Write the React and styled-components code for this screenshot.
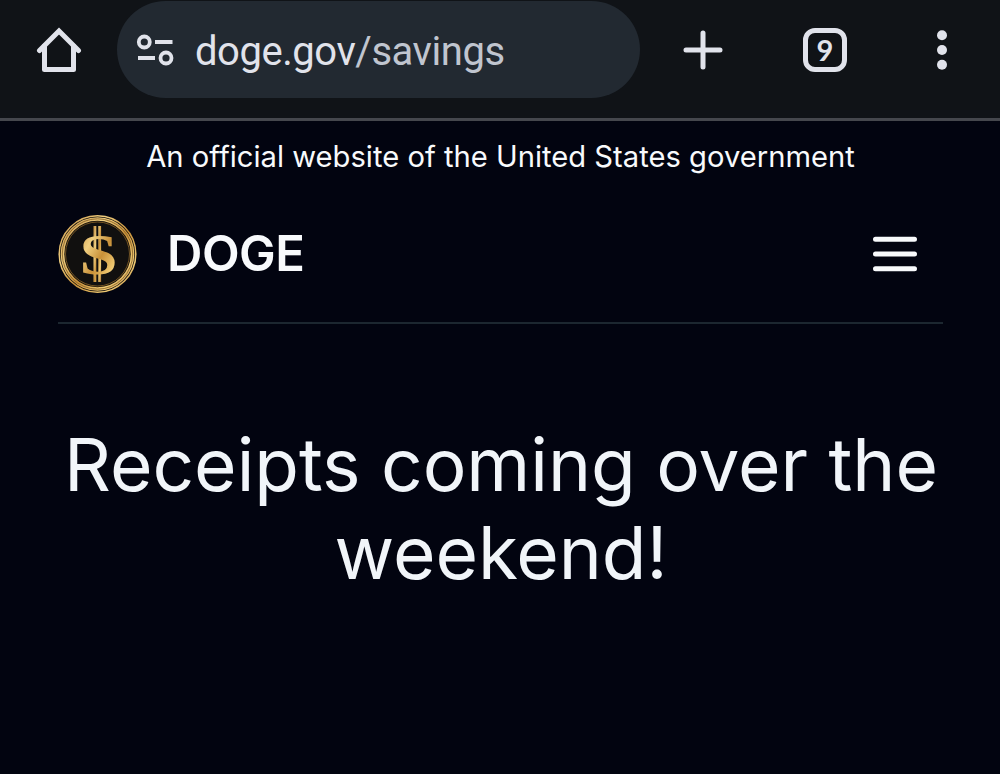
import styled, { createGlobalStyle } from "styled-components"

const GlobalStyle = createGlobalStyle`
    * {
        box-sizing: border-box;
    }

    body {
        margin: 0;
        background-color: #020410;
        font-family: Inter, "Liberation Sans", sans-serif;
    }
`
const Page = styled.div`
    height: 774px;
    display: flex;
    flex-direction: column;
    overflow: hidden;
`
const BrowserBar = styled.div`
    height: 121px;
    display: flex;
    align-items: flex-start;
    padding: 1px 36px 0 36px;
    background-color: #101317;
    border-bottom: 3px solid #45474d;
`
const BarButton = styled.button`
    width: ${({ $width }) => $width || 46}px;
    height: 98px;
    flex: none;
    display: flex;
    align-items: center;
    justify-content: center;
    margin-left: ${({ $gap }) => $gap || 0}px;
    padding: 0;
    border: 0;
    background: none;
    color: #e1e3eb;
`
const AddressBar = styled.div`
    width: 523px;
    height: 97px;
    flex: none;
    display: flex;
    align-items: center;
    margin-left: 35px;
    padding-left: 19px;
    border-radius: 49px;
    background-color: #222931;
    color: #e1e3eb;
`
const Url = styled.span`
    margin-left: 19px;
    padding-top: 4px;
    font-family: Roboto, sans-serif;
    font-size: 40px;
    line-height: 48px;
    letter-spacing: -0.45px;
    white-space: nowrap;
`
const Path = styled.span`
    color: #c0c5cf;
`
const TabCount = styled.span`
    width: 44px;
    height: 44px;
    display: flex;
    align-items: center;
    justify-content: center;
    border: 5px solid #e1e3eb;
    border-radius: 12px;
    font-family: Lato, sans-serif;
    font-size: 29px;
    font-weight: 700;
    line-height: 34px;
`
const Banner = styled.p`
    margin: 0;
    padding: 16px 0 0 1px;
    text-align: center;
    font-size: 29.2px;
    line-height: 40px;
    color: #f8fafc;
    white-space: nowrap;
`
const Header = styled.header`
    height: 147px;
    display: flex;
    align-items: center;
    margin: 0 57px 0 58px;
    padding-top: 8px;
    border-bottom: 2px solid #1c2730;
`
const Brand = styled.span`
    margin-left: 29px;
    font-size: 49px;
    font-weight: 600;
    line-height: 60px;
    letter-spacing: -0.5px;
    color: #f8fafc;
`
const MenuButton = styled.button`
    display: flex;
    margin-left: auto;
    margin-right: 26px;
    padding: 0;
    border: 0;
    background: none;
    color: #f8fafc;
`
const Title = styled.h1`
    margin: 97px 0 0;
    padding-left: 2px;
    text-align: center;
    font-size: 73px;
    font-weight: 400;
    line-height: 88px;
    letter-spacing: -0.05px;
    color: #f1f5f9;
`

const HomeIcon = () => (
    <svg width="46" height="46" viewBox="0 0 46 46" fill="none" stroke="currentColor" strokeWidth="5" strokeLinecap="round" strokeLinejoin="round">
        <path d="M3.5 23.5 23 4 42.5 23.5" strokeLinejoin="miter" />
        <path d="M8.5 19V42.5H37.5V19" />
    </svg>
)

const TuneIcon = () => (
    <svg width="40" height="34" viewBox="0 0 40 34" fill="none" stroke="currentColor" strokeWidth="3.8">
        <circle cx="8.3" cy="9" r="5.5" />
        <path d="M19 9H36.5M2 25H19" />
        <circle cx="30" cy="25" r="5.5" />
    </svg>
)

const PlusIcon = () => (
    <svg width="40" height="40" viewBox="0 0 40 40" stroke="currentColor" strokeWidth="5" strokeLinecap="round">
        <path d="M3 20H37M20 3V37" />
    </svg>
)

const DotsIcon = () => (
    <svg width="12" height="42" viewBox="0 0 12 42" fill="currentColor">
        <circle cx="6" cy="6.3" r="5" />
        <circle cx="6" cy="21" r="5" />
        <circle cx="6" cy="35.7" r="5" />
    </svg>
)

const MenuIcon = () => (
    <svg width="44" height="36" viewBox="0 0 44 36" stroke="currentColor" strokeWidth="5" strokeLinecap="round">
        <path d="M2.5 3.3H41.5M2.5 18H41.5M2.5 32.7H41.5" />
    </svg>
)

const Coin = () => (
    <svg width="80" height="80" viewBox="0 0 80 80">
        <defs>
            <linearGradient id="gold" x1="0" y1="0" x2="1" y2="1">
                <stop offset="0" stopColor="#c18c3e" />
                <stop offset="0.3" stopColor="#f0cf80" />
                <stop offset="0.55" stopColor="#c89038" />
                <stop offset="0.8" stopColor="#f2cd76" />
                <stop offset="1" stopColor="#a87330" />
            </linearGradient>
        </defs>
        <circle cx="39.5" cy="40" r="38.3" fill="#15110c" stroke="url(#gold)" strokeWidth="1.5" />
        <circle cx="39.5" cy="40" r="35" fill="none" stroke="url(#gold)" strokeWidth="3.6" />
        <circle cx="39.5" cy="40" r="35.2" fill="none" stroke="#7d5a26" strokeWidth="0.8" />
        <circle cx="39.5" cy="40" r="32" fill="#11100f" stroke="#8a6429" strokeWidth="0.8" />
        <g fill="url(#gold)">
            <path d="M35.5 12H38.3V68H35.5ZM40.3 12H43.1V68H40.3Z" />
            <text transform="translate(40.5 60) scale(1.18 1)" textAnchor="middle" fontFamily="Liberation Serif, serif" fontSize="58" fontWeight="700">S</text>
        </g>
    </svg>
)

const App = () => {
    return <Page>
        <GlobalStyle />
        <BrowserBar>
            <BarButton aria-label="Home"><HomeIcon /></BarButton>
            <AddressBar>
                <TuneIcon />
                <Url>doge.gov<Path>/savings</Path></Url>
            </AddressBar>
            <BarButton aria-label="New tab" $gap={40}><PlusIcon /></BarButton>
            <BarButton aria-label="Tabs" $gap={76}><TabCount>9</TabCount></BarButton>
            <BarButton aria-label="More" $gap={88} $width={12}><DotsIcon /></BarButton>
        </BrowserBar>

        <Banner>An official website of the United States government</Banner>

        <Header>
            <Coin />
            <Brand>DOGE</Brand>
            <MenuButton aria-label="Menu"><MenuIcon /></MenuButton>
        </Header>

        <Title>Receipts coming over the<br />weekend!</Title>
    </Page>
}

export default App
